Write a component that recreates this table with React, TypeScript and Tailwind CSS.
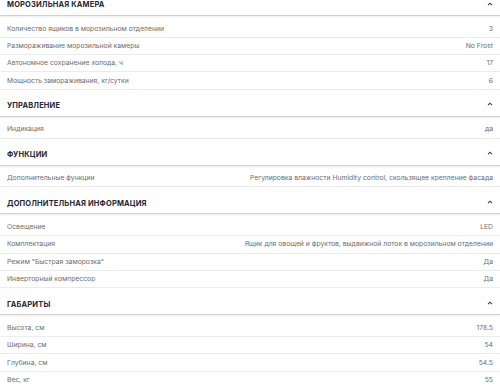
import React from "react";

type Section = { title: string; rows: [string, string][] };

const sections: Section[] = [
  {
    title: "МОРОЗИЛЬНАЯ КАМЕРА",
    rows: [
      ["Количество ящиков в морозильном отделении", "3"],
      ["Размораживание морозильной камеры", "No Frost"],
      ["Автономное сохранение холода, ч", "17"],
      ["Мощность замораживания, кг/сутки", "6"],
    ],
  },
  { title: "УПРАВЛЕНИЕ", rows: [["Индикация", "да"]] },
  {
    title: "ФУНКЦИИ",
    rows: [["Дополнительные функции", "Регулировка влажности Humidity control, скользящее крепление фасада"]],
  },
  {
    title: "ДОПОЛНИТЕЛЬНАЯ ИНФОРМАЦИЯ",
    rows: [
      ["Освещение", "LED"],
      ["Комплектация", "Ящик для овощей и фруктов, выдвижной лоток в морозильном отделении"],
      ["Режим \"Быстрая заморозка\"", "Да"],
      ["Инверторный компрессор", "Да"],
    ],
  },
  {
    title: "ГАБАРИТЫ",
    rows: [
      ["Высота, см", "178.5"],
      ["Ширина, см", "54"],
      ["Глубина, см", "54.5"],
      ["Вес, кг", "55"],
    ],
  },
];

function Chevron() {
  return (
    <svg width="6" height="4" viewBox="0 0 6 4" className="block -mt-[3px]">
      <polyline points="1,3.2 3,1.2 5,3.2" fill="none" stroke="#3a3d48" strokeWidth="1.1" />
    </svg>
  );
}

export default function App() {
  return (
    <div className="w-[500px] h-[388px] overflow-hidden bg-white" style={{ fontFamily: "Inter, 'Noto Sans', sans-serif" }}>
      <div className="-mt-[11px]">
        {sections.map((s) => (
          <div key={s.title}>
            <div className="h-[27px] flex items-center justify-between pl-[7px] pr-[7px] pt-[6px] border-b border-[#d0d0d0] shadow-[0_1px_2px_rgba(0,0,0,0.08)]">
              <span className="text-[7.5px] font-bold text-[#262936] tracking-[0.02em]">{s.title}</span>
              <Chevron />
            </div>
            <div className="pt-[4.5px]">
              {s.rows.map(([k, v]) => (
                <div key={k} className="h-[17.33px] flex items-center justify-between px-[7px] border-b border-[#ececec] text-[6.8px] text-[#6e6e6e]">
                  <span>{k}</span>
                  <span>{v}</span>
                </div>
              ))}
            </div>
          </div>
        ))}
      </div>
    </div>
  );
}
